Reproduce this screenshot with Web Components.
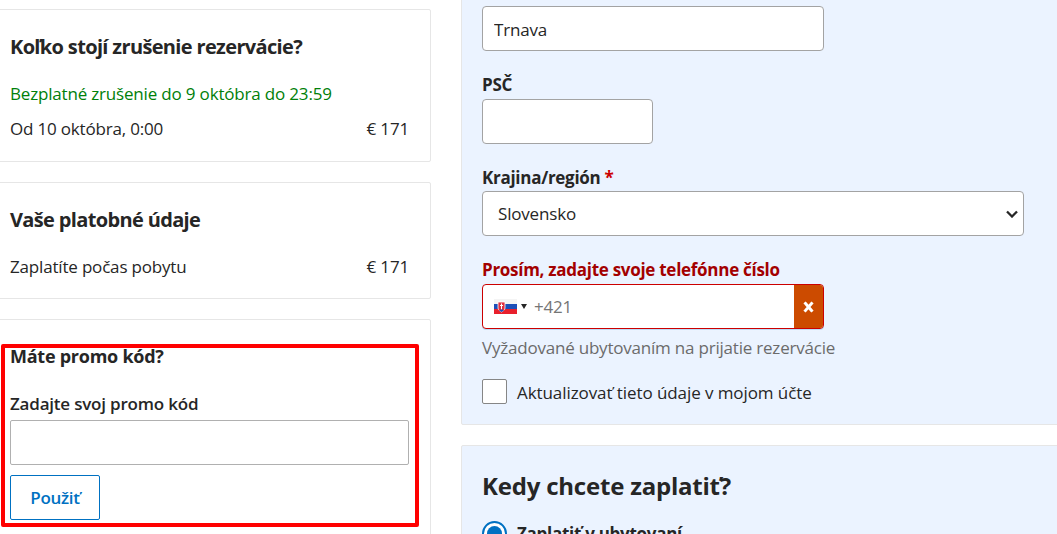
<!DOCTYPE html>
<html lang="sk">
<head>
<meta charset="utf-8">
<title>Rezervácia</title>
<style>
  html, body { margin: 0; height: 100%; overflow: hidden; background: #fff; }
  body { font: 17px/24px "Open Sans", "Noto Sans", sans-serif; color: #262626; letter-spacing: -0.18px; }
</style>
</head>
<body>
<booking-page>
  <div slot="left">
    <info-card heading="Koľko stojí zrušenie rezervácie?">
      <p style="margin:0 0 11px;color:#008009">Bezplatné zrušenie do 9 októbra do 23:59</p>
      <price-row label="Od 10 októbra, 0:00" price="€ 171"></price-row>
    </info-card>
    <info-card heading="Vaše platobné údaje" style="padding-bottom:19px">
      <price-row label="Zaplatíte počas pobytu" price="€ 171"></price-row>
    </info-card>
    <promo-card></promo-card>
  </div>
  <div slot="right">
    <guest-form></guest-form>
    <pay-card></pay-card>
  </div>
</booking-page>

<script>
// hlavne rozlozenie: dva stlpce, stranka je odscrollovana
class BookingPage extends HTMLElement {
  constructor() {
    super();
    this.attachShadow({ mode: 'open' });
    this.shadowRoot.innerHTML = `
      <style>
        :host { display: flex; gap: 30px; margin-left: -12px; width: 1120px; height: 534px; overflow: hidden; }
        .left { width: 443px; flex: none; padding-top: 9px; }
        .right { flex: 1; min-width: 0; margin-top: -93px; }
      </style>
      <div class="left"><slot name="left"></slot></div>
      <div class="right"><slot name="right"></slot></div>
    `;
  }
}

class InfoCard extends HTMLElement {
  constructor() {
    super();
    this.attachShadow({ mode: 'open' });
  }

  connectedCallback() {
    const heading = this.getAttribute('heading') || '';
    this.shadowRoot.innerHTML = `
      <style>
        :host { display: block; box-sizing: border-box; border: 1px solid #e6e6e6; border-radius: 2px; padding: 23px 21px 20px; margin-bottom: 20px; background: #fff; }
        h2 { margin: 0 0 21px; font-size: 20px; line-height: 28px; font-weight: 700; color: #262626; letter-spacing: -0.65px; }
      </style>
      <h2>${heading}</h2>
      <slot></slot>
    `;
  }
}

class PriceRow extends HTMLElement {
  constructor() {
    super();
    this.attachShadow({ mode: 'open' });
  }

  connectedCallback() {
    this.shadowRoot.innerHTML = `
      <style>
        :host { display: flex; justify-content: space-between; }
      </style>
      <span>${this.getAttribute('label')}</span>
      <span>${this.getAttribute('price')}</span>
    `;
  }
}

class PromoCard extends HTMLElement {
  constructor() {
    super();
    this.attachShadow({ mode: 'open' });
    this.shadowRoot.innerHTML = `
      <style>
        :host { display: block; position: relative; box-sizing: border-box; border: 1px solid #e6e6e6; border-radius: 2px; padding: 23px 21px 20px; height: 260px; background: #fff; }
        h2 { margin: 0 0 23px; font-size: 18px; line-height: 26px; font-weight: 700; letter-spacing: -0.25px; }
        label { display: block; font-weight: 600; margin-bottom: 4px; letter-spacing: -0.2px; }
        input { display: block; box-sizing: border-box; width: 100%; height: 45px; border: 1px solid #b0b0b0; border-radius: 2px; background: #fff; margin-bottom: 10px; }
        button { display: block; box-sizing: border-box; width: 90px; height: 45px; padding: 0; border: 1px solid #0071c2; border-radius: 2px; background: #fff; color: #0071c2; font: inherit; font-weight: 600; letter-spacing: -0.3px; }
        /* cervene oznacenie cez obsah */
        .mark { position: absolute; left: 12px; top: 24px; width: 418px; height: 183px; box-sizing: border-box; border: 4px solid #f00; border-radius: 2px; pointer-events: none; }
      </style>
      <h2>Máte promo kód?</h2>
      <label>Zadajte svoj promo kód</label>
      <input type="text">
      <button>Použiť</button>
      <div class="mark"></div>
    `;
  }
}

class GuestForm extends HTMLElement {
  constructor() {
    super();
    this.attachShadow({ mode: 'open' });
    this.shadowRoot.innerHTML = `
      <style>
        :host { display: block; box-sizing: border-box; height: 518px; padding: 98px 20px 0; border: 1px solid #e6e6e6; border-radius: 2px; background: #ebf3ff; margin-bottom: 20px; }
        .field { display: block; box-sizing: border-box; height: 45px; border: 1px solid #a3a3a3; border-radius: 4px; background: #fff; padding: 1px 11px 0; font: inherit; color: #262626; letter-spacing: -0.18px; width: 342px; outline: none; }
        label { display: block; font-weight: 700; letter-spacing: -0.28px; }
        .psc { margin-top: 22px; margin-bottom: 2px; }
        .country { margin-top: 22px; margin-bottom: 1px; }
        em { color: #c00; font-style: normal; }
        .select { position: relative; width: 542px; display: flex; align-items: center; padding-left: 15px; }
        .select svg { position: absolute; right: 5px; top: 18px; }
        .error { margin-top: 22px; margin-bottom: 2px; color: #a30000; }
        .hint { margin: 7px 0 0; color: #6b6b6b; letter-spacing: -0.21px; }
        .check { display: flex; align-items: center; gap: 10px; margin-top: 18px; letter-spacing: -0.08px; }
        .check span + span { padding-top: 3px; }
        .box { box-sizing: border-box; width: 25px; height: 25px; border: 1px solid #868686; border-radius: 2px; background: #fff; }
      </style>
      <input class="field" value="Trnava">
      <label class="psc">PSČ</label>
      <input class="field" style="width:171px">
      <label class="country">Krajina/región <em>*</em></label>
      <div class="field select">Slovensko
        <svg width="12" height="8" viewBox="0 0 12 8"><path d="M1 1.500l5 5 5-5" fill="none" stroke="#262626" stroke-width="2.300"/></svg>
      </div>
      <label class="error">Prosím, zadajte svoje telefónne číslo</label>
      <phone-input></phone-input>
      <p class="hint">Vyžadované ubytovaním na prijatie rezervácie</p>
      <div class="check"><span class="box"></span><span>Aktualizovať tieto údaje v mojom účte</span></div>
    `;
  }
}

class PhoneInput extends HTMLElement {
  constructor() {
    super();
    this.attachShadow({ mode: 'open' });
    this.shadowRoot.innerHTML = `
      <style>
        :host { display: flex; align-items: stretch; box-sizing: border-box; width: 342px; height: 45px; border: 1px solid #c00; border-radius: 4px; background: #fff; overflow: hidden; box-shadow: 0 1px 0 #bcdcf7; }
        .flag { display: flex; align-items: center; flex: 1; padding-left: 11px; gap: 4px; }
        .arrow { width: 0; height: 0; border: 3px solid transparent; border-top: 5px solid #262626; border-bottom: 0; }
        .code { color: #757575; margin-left: 3px; padding-top: 1px; }
        .err { width: 29px; display: flex; align-items: center; justify-content: center; background: #cc4b00; }
      </style>
      <div class="flag">
        <svg width="23" height="15" viewBox="0 0 23 15">
          <rect width="23" height="5" fill="#f4f4f4"/>
          <rect y="5" width="23" height="5" fill="#1c4fb8"/>
          <rect y="10" width="23" height="5" fill="#e8202c"/>
          <path d="M4 3h7v6c0 2-2 3-3.500 4C6 12 4 11 4 9z" fill="#e03040" stroke="#fff" stroke-width=".8"/>
          <path d="M7.500 4.500v6M6 6.500h3" stroke="#fff" stroke-width="1"/>
          <path d="M5 11.500c1-1.500 4-1.500 5 0l-2.500 1.500z" fill="#1c4fb8"/>
        </svg>
        <span class="arrow"></span>
        <span class="code">+421</span>
      </div>
      <div class="err">
        <svg width="11" height="12" viewBox="0 0 11 12"><path d="M2.500 2.500l6 7M8.500 2.500l-6 7" stroke="#fff" stroke-width="3" stroke-linecap="square"/></svg>
      </div>
    `;
  }
}

class PayCard extends HTMLElement {
  constructor() {
    super();
    this.attachShadow({ mode: 'open' });
    this.shadowRoot.innerHTML = `
      <style>
        :host { display: block; box-sizing: border-box; height: 300px; padding: 20px 20px; border: 1px solid #e6e6e6; border-radius: 2px; background: #ebf3ff; }
        h2 { margin: 0 0 15px; font-size: 24px; line-height: 40px; font-weight: 700; letter-spacing: -0.21px; }
        .opt { display: flex; align-items: center; gap: 10px; font-weight: 700; letter-spacing: -0.28px; }
        .radio { box-sizing: border-box; width: 25px; height: 25px; border: 2px solid #0071c2; border-radius: 50%; background: #fff; display: flex; align-items: center; justify-content: center; }
        .radio i { width: 15px; height: 15px; border-radius: 50%; background: #0071c2; }
      </style>
      <h2>Kedy chcete zaplatiť?</h2>
      <div class="opt"><span class="radio"><i></i></span><span>Zaplatiť v ubytovaní</span></div>
    `;
  }
}

customElements.define('booking-page', BookingPage);
customElements.define('info-card', InfoCard);
customElements.define('price-row', PriceRow);
customElements.define('promo-card', PromoCard);
customElements.define('guest-form', GuestForm);
customElements.define('phone-input', PhoneInput);
customElements.define('pay-card', PayCard);
</script>
</body>
</html>
